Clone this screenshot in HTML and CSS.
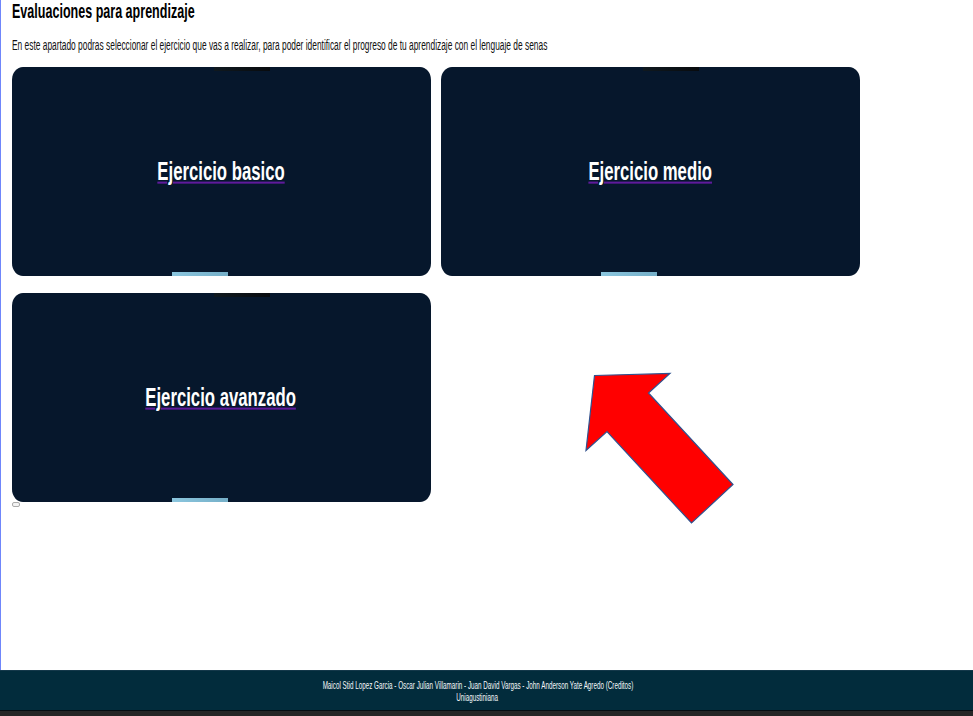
FILE: index.html
```html
<!DOCTYPE html>
<html lang="es">
<head>
<meta charset="utf-8">
<title>Evaluaciones para aprendizaje</title>
<link rel="stylesheet" href="styles.css">
</head>
<body>
<main>
  <h1><span class="narrow">Evaluaciones para aprendizaje</span></h1>
  <p class="intro"><span class="narrow">En este apartado podras seleccionar el ejercicio que vas a realizar, para poder identificar el progreso de tu aprendizaje con el lenguaje de senas</span></p>
  <div class="cards">
    <a class="card" href="#"><span class="narrow">Ejercicio basico</span></a>
    <a class="card" href="#"><span class="narrow">Ejercicio medio</span></a>
    <a class="card" href="#"><span class="narrow">Ejercicio avanzado</span></a>
  </div>
  <button class="mini" aria-label="Enviar"></button>
  <svg class="arrow" width="160" height="160" viewBox="580 368 160 160">
    <path d="M594.5 375.5 670 373.5 648.5 393 733 484.5 691.5 523 607 431.5 586 450.500Z" fill="#f00" stroke="#2f528f" stroke-width="1.2"/>
  </svg>
</main>
<footer>
  <div class="narrow">Maicol Stid Lopez Garcia - Oscar Julian Villamarin - Juan David Vargas - John Anderson Yate Agredo (Creditos)</div>
  <div class="narrow">Uniagustiniana</div>
</footer>
<div class="taskbar"></div>
</body>
</html>
```
FILE: styles.css
```css
* { box-sizing: border-box; }
body {
  margin: 0;
  height: 716px;
  display: flex;
  flex-direction: column;
  overflow: hidden;
  background: #fff;
  color: #000;
  font-family: "Liberation Sans", Arial, sans-serif;
}
main {
  position: relative;
  flex: 1;
  padding: 0 0 0 11px;
  border-left: 1px solid #6f86fb;
}
.narrow {
  display: inline-block;
  white-space: nowrap;
  transform: scale(.661, 1.04);
}
h1 {
  margin: 0;
  height: 36px;
  padding-top: 1px;
  font-size: 19px;
  line-height: 22px;
}
h1 .narrow, .intro .narrow { transform-origin: left; }
.intro {
  margin: 0;
  height: 31px;
  font-size: 12.7px;
  line-height: 20px;
  color: #111;
}
.intro .narrow { transform: scale(.66, 1.08); }
h1 .narrow { transform: scale(.66, 1.06); }
.cards {
  display: grid;
  grid-template-columns: 418.5px 418.5px;
  grid-auto-rows: 209px;
  gap: 17px 10.5px;
}
.card {
  display: flex;
  align-items: center;
  justify-content: center;
  border-radius: 11px / 13px;
  background:
    linear-gradient(90deg, #10191f, #080b0e) 202px 0 / 56px 4px no-repeat,
    linear-gradient(90deg, #8bc6de, #75afc8) 160px 100% / 56px 4px no-repeat,
    #06172c;
  color: #fff;
  font-size: 25.3px;
  font-weight: bold;
  text-decoration: none;
}
.card .narrow {
  text-decoration: underline #5e1a9b 2px;
  text-underline-offset: 2px;
}
.card .narrow { transform: translate(-.3px, -.6px) scale(.661, 1.02); }
.mini {
  display: block;
  width: 8px;
  height: 5px;
  margin: 0;
  padding: 0;
  border: 1px solid #aaa;
  border-radius: 2px;
  background: #f3f3f3;
}
.arrow {
  position: absolute;
  left: 579px;
  top: 368px;
}
footer {
  display: flex;
  flex-direction: column;
  align-items: center;
  height: 41px;
  padding: 9px 18px 0 0;
  border-top: 1px solid #14384a;
  border-bottom: 1px solid #050d12;
  background: #022c3c;
  color: #f4f8fa;
  font-size: 10px;
  line-height: 12px;
}
footer .narrow { transform: scale(.629, 1.04); }
.taskbar {
  height: 5px;
  background: #262626;
}
```
